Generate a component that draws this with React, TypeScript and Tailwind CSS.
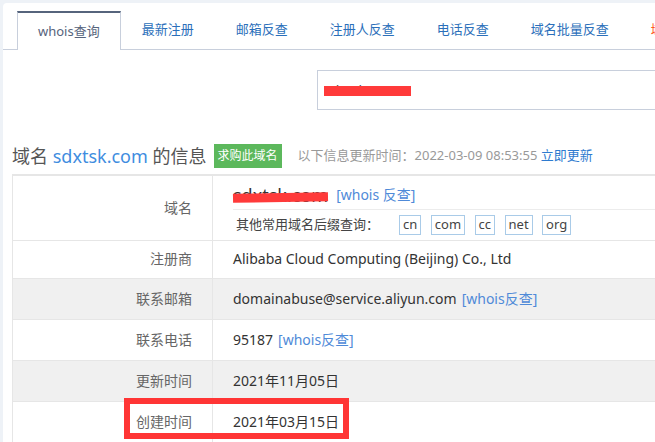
import React from "react";

const tabs = ["最新注册", "邮箱反查", "注册人反查", "电话反查", "域名批量反查"];
const suffixes = ["cn", "com", "cc", "net", "org"];

function Row({
  label,
  gray,
  h,
  children,
}: {
  label: string;
  gray?: boolean;
  h: string;
  children: React.ReactNode;
}) {
  return (
    <div className={`flex border-t border-[#e6e6e6] ${h} ${gray ? "bg-[#f0f0f0]" : "bg-white"}`}>
      <div className="w-[200px] shrink-0 border-r border-[#e6e6e6] flex items-center justify-end pr-[20px] pb-[2px] text-[14px] text-[#666]">
        {label}
      </div>
      <div className="flex-1 flex items-center pl-[20px] pb-[2px] text-[14px] text-[#333] whitespace-nowrap">{children}</div>
    </div>
  );
}

export default function App() {
  return (
    <div className="relative w-[655px] h-[442px] overflow-hidden bg-[#eef2f7] pl-[3px] pt-[3px] font-['Noto_Sans','Noto_Sans_CJK_SC',sans-serif]">
      <div className="bg-white rounded-tl-[4px] h-full w-[652px] overflow-hidden">
        {/* Tabs */}
        <div className="flex pt-[8px] pl-[14px] border-b border-[#c8cfdc] whitespace-nowrap">
          <div className="h-[35px] -mb-[1px] box-content pb-[1px] bg-white border-t-2 border-t-[#56647c] border-x border-x-[#c8cfdc] px-[20px] flex items-center pt-[1px] text-[13px] text-[#56647c]">
            whois查询
          </div>
          {tabs.map((t) => (
            <div
              key={t}
              className="h-[35px] border-x border-transparent px-[20px] flex items-center pt-[3px] text-[13px] text-[#2b6fba]"
            >
              {t}
            </div>
          ))}
          <div className="h-[35px] border-x border-transparent px-[20px] flex items-center pt-[3px] text-[13px] text-[#ff5a1f]">
            域名
          </div>
        </div>

        {/* Search */}
        <div className="mt-[20px] ml-[314px] h-[40px] w-[420px] border border-[#c8cfdc] flex items-center pl-[6px]">
          <span className="relative text-[14px] text-[#555] pt-[1px]">
            sdxtsk.com
            <span className="absolute left-0 top-[7px] w-[87px] h-[10px] bg-[#ff3a3a]" />
          </span>
        </div>

        {/* Heading */}
        <div className="mt-[31px] ml-[9px] h-[30px] flex items-center whitespace-nowrap">
          <span className="text-[18px] text-[#555]">
            域名 <span className="text-[#3f8ddf]">sdxtsk.com</span> 的信息
          </span>
          <span className="ml-[7px] h-[24px] px-[4px] flex items-center bg-[#5cb85c] text-white text-[12px]">
            求购此域名
          </span>
          <span className="ml-[16px] text-[13px] text-[#999]">
            以下信息更新时间：2022-03-09 08:53:55 <span className="text-[#2e7bcf]">立即更新</span>
          </span>
        </div>

        {/* Table */}
        <div className="mt-[3px] ml-[9px] border-l border-[#e6e6e6] border-t-2 border-t-[#e6e6e6]">
          <div className="flex h-[64px] bg-white">
            <div className="w-[200px] shrink-0 border-r border-[#e6e6e6] flex items-center justify-end pr-[20px] pb-[2px] text-[14px] text-[#666]">
              域名
            </div>
            <div className="flex-1 pl-[20px] pt-[9px] whitespace-nowrap">
              <div className="h-[25px] border-b border-[#ececec] flex items-start leading-[20px]">
                <span className="relative text-[18px] text-[#333] leading-[20px]">
                  sdxtsk.com
                  <span className="absolute left-0 top-[8px] w-[95px] h-[9px] bg-[#ff3a3a] -rotate-[1deg]" />
                </span>
                <span className="ml-[8px] text-[14px] text-[#4f8ad8]">[whois 反查]</span>
              </div>
              <div className="mt-[5px] flex items-center h-[20px]">
                <span className="ml-[3px] text-[13px] text-[#444]">其他常用域名后缀查询：</span>
                <div className="ml-[20px] flex gap-[9.5px]">
                  {suffixes.map((s) => (
                    <span
                      key={s}
                      className="h-[20px] px-[3px] border border-[#a9cbe8] flex items-center text-[13px] text-[#444]"
                    >
                      {s}
                    </span>
                  ))}
                </div>
              </div>
            </div>
          </div>
          <Row label="注册商" h="h-[38px]">
            Alibaba Cloud Computing (Beijing) Co., Ltd
          </Row>
          <Row label="联系邮箱" h="h-[41px]" gray>
            domainabuse@service.aliyun.com <span className="ml-[5px] text-[#4f8ad8]">[whois反查]</span>
          </Row>
          <Row label="联系电话" h="h-[41px]">
            95187 <span className="ml-[5px] text-[#4f8ad8]">[whois反查]</span>
          </Row>
          <Row label="更新时间" h="h-[41px]" gray>
            2021年11月05日
          </Row>
          <Row label="创建时间" h="h-[41px]">
            2021年03月15日
          </Row>
        </div>
      </div>

      {/* Annotation box */}
      <div className="absolute left-[124px] top-[398px] w-[225px] h-[41px] border-[6px] border-[#ff3535]" />
    </div>
  );
}
